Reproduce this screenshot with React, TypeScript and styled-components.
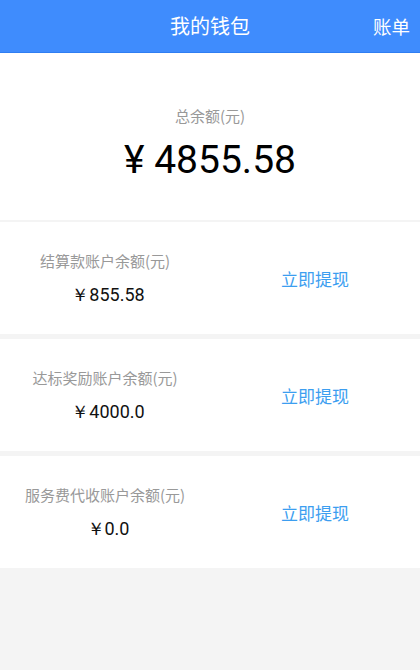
import React from "react";
import styled, { createGlobalStyle } from "styled-components";

const GlobalStyle = createGlobalStyle`
  html, body { margin: 0; padding: 0; background: #f4f4f4; }
  body { font-family: Roboto, "Noto Sans CJK SC", sans-serif; }
  * { box-sizing: border-box; }
`;

const Page = styled.div`
  width: 420px;
  min-height: 670px;
  background: #f4f4f4;
  display: flex;
  flex-direction: column;
`;

const Header = styled.header`
  height: 53px;
  background: #3f8cfd;
  border-bottom: 1px solid #2f7ef2;
  display: grid;
  grid-template-columns: 1fr auto 1fr;
  align-items: center;
  color: #fff;
  font-family: "Noto Sans CJK SC", sans-serif;
`;

const Title = styled.h1`
  grid-column: 2;
  margin: 0;
  font-size: 20px;
  font-weight: 400;
  line-height: 1;
`;

const HeaderAction = styled.span`
  grid-column: 3;
  justify-self: end;
  padding-right: 10px;
  font-size: 18.5px;
  line-height: 1;
`;

const TotalCard = styled.section`
  height: 167px;
  background: #fff;
  display: flex;
  flex-direction: column;
  align-items: center;
  justify-content: center;
  gap: 11px;
  padding-top: 16px;
  margin-bottom: 2px;
`;

const Label = styled.div`
  font-family: "Noto Sans CJK SC", sans-serif;
  color: #999;
  font-size: 15px;
  line-height: 20px;
`;

const TotalAmount = styled.div`
  font-family: Roboto, sans-serif;
  color: #000;
  font-size: 39px;
  line-height: 46px;
`;

const List = styled.div`
  display: flex;
  flex-direction: column;
  gap: 5px;
`;

const Row = styled.div`
  height: 112px;
  background: #fff;
  display: grid;
  grid-template-columns: 1fr 1fr;
  align-items: center;
`;

const Info = styled.div`
  display: flex;
  flex-direction: column;
  align-items: center;
  gap: 12px;
`;

const Amount = styled.div`
  font-family: Roboto, sans-serif;
  color: #111;
  font-size: 18px;
  line-height: 22px;
  padding-left: 6px;
  padding-top: 1px;
`;

const Withdraw = styled.button`
  justify-self: center;
  background: none;
  border: none;
  padding: 0;
  font-family: "Noto Sans CJK SC", sans-serif;
  font-size: 17px;
  color: #3c9ef0;
  cursor: pointer;
`;

const accounts = [
  { label: "结算款账户余额(元)", amount: "￥855.58" },
  { label: "达标奖励账户余额(元)", amount: "￥4000.0" },
  { label: "服务费代收账户余额(元)", amount: "￥0.0" },
];

export default function App() {
  return (
    <>
      <GlobalStyle />
      <Page>
        <Header>
          <Title>我的钱包</Title>
          <HeaderAction>账单</HeaderAction>
        </Header>
        <TotalCard>
          <Label>总余额(元)</Label>
          <TotalAmount>¥ 4855.58</TotalAmount>
        </TotalCard>
        <List>
          {accounts.map((a) => (
            <Row key={a.label}>
              <Info>
                <Label>{a.label}</Label>
                <Amount>{a.amount}</Amount>
              </Info>
              <Withdraw>立即提现</Withdraw>
            </Row>
          ))}
        </List>
      </Page>
    </>
  );
}
